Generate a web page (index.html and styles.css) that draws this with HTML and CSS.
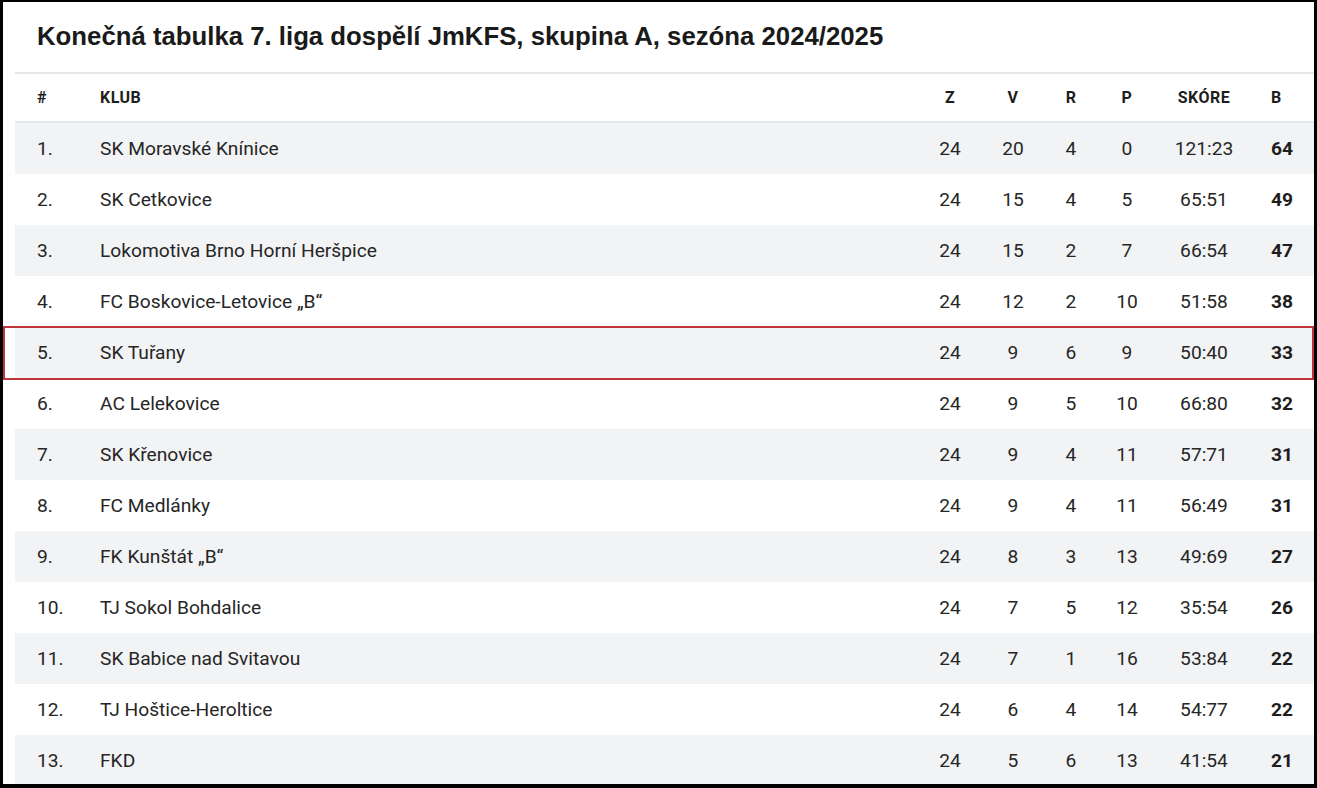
FILE: index.html
```html
<!DOCTYPE html>
<html lang="cs">
<head>
<meta charset="utf-8">
<title>Konečná tabulka</title>
<link rel="stylesheet" href="styles.css">
</head>
<body>
<div class="frame">
  <h1 class="title">Konečná tabulka 7. liga dospělí JmKFS, skupina A, sezóna 2024/2025</h1>
  <div class="table">
    <div class="row head">
      <div class="c pos">#</div><div class="c club">KLUB</div><div class="c n">Z</div><div class="c n">V</div><div class="c n">R</div><div class="c n">P</div><div class="c n">SKÓRE</div><div class="c pts">B</div>
    </div>
    <div class="row alt"><div class="c pos">1.</div><div class="c club">SK Moravské Knínice</div><div class="c n">24</div><div class="c n">20</div><div class="c n">4</div><div class="c n">0</div><div class="c n">121:23</div><div class="c pts">64</div></div>
    <div class="row"><div class="c pos">2.</div><div class="c club">SK Cetkovice</div><div class="c n">24</div><div class="c n">15</div><div class="c n">4</div><div class="c n">5</div><div class="c n">65:51</div><div class="c pts">49</div></div>
    <div class="row alt"><div class="c pos">3.</div><div class="c club">Lokomotiva Brno Horní Heršpice</div><div class="c n">24</div><div class="c n">15</div><div class="c n">2</div><div class="c n">7</div><div class="c n">66:54</div><div class="c pts">47</div></div>
    <div class="row"><div class="c pos">4.</div><div class="c club">FC Boskovice-Letovice „B“</div><div class="c n">24</div><div class="c n">12</div><div class="c n">2</div><div class="c n">10</div><div class="c n">51:58</div><div class="c pts">38</div></div>
    <div class="row alt mark"><div class="c pos">5.</div><div class="c club">SK Tuřany</div><div class="c n">24</div><div class="c n">9</div><div class="c n">6</div><div class="c n">9</div><div class="c n">50:40</div><div class="c pts">33</div></div>
    <div class="row"><div class="c pos">6.</div><div class="c club">AC Lelekovice</div><div class="c n">24</div><div class="c n">9</div><div class="c n">5</div><div class="c n">10</div><div class="c n">66:80</div><div class="c pts">32</div></div>
    <div class="row alt"><div class="c pos">7.</div><div class="c club">SK Křenovice</div><div class="c n">24</div><div class="c n">9</div><div class="c n">4</div><div class="c n">11</div><div class="c n">57:71</div><div class="c pts">31</div></div>
    <div class="row"><div class="c pos">8.</div><div class="c club">FC Medlánky</div><div class="c n">24</div><div class="c n">9</div><div class="c n">4</div><div class="c n">11</div><div class="c n">56:49</div><div class="c pts">31</div></div>
    <div class="row alt"><div class="c pos">9.</div><div class="c club">FK Kunštát „B“</div><div class="c n">24</div><div class="c n">8</div><div class="c n">3</div><div class="c n">13</div><div class="c n">49:69</div><div class="c pts">27</div></div>
    <div class="row"><div class="c pos">10.</div><div class="c club">TJ Sokol Bohdalice</div><div class="c n">24</div><div class="c n">7</div><div class="c n">5</div><div class="c n">12</div><div class="c n">35:54</div><div class="c pts">26</div></div>
    <div class="row alt"><div class="c pos">11.</div><div class="c club">SK Babice nad Svitavou</div><div class="c n">24</div><div class="c n">7</div><div class="c n">1</div><div class="c n">16</div><div class="c n">53:84</div><div class="c pts">22</div></div>
    <div class="row"><div class="c pos">12.</div><div class="c club">TJ Hoštice-Heroltice</div><div class="c n">24</div><div class="c n">6</div><div class="c n">4</div><div class="c n">14</div><div class="c n">54:77</div><div class="c pts">22</div></div>
    <div class="row alt"><div class="c pos">13.</div><div class="c club">FKD</div><div class="c n">24</div><div class="c n">5</div><div class="c n">6</div><div class="c n">13</div><div class="c n">41:54</div><div class="c pts">21</div></div>
  </div>
</div>
</body>
</html>
```

FILE: styles.css
```css
* { box-sizing: border-box; }
html, body { margin: 0; padding: 0; background: #fff; }
.frame {
  height: 788px;
  border-style: solid;
  border-color: #000;
  border-width: 2px 3px 4px 3px;
  overflow: hidden;
  background: #fff;
  padding-left: 12px;
}
.title {
  margin: 0;
  height: 70px;
  padding: 19px 0 0 22px;
  font-family: "Liberation Sans", Arial, sans-serif;
  font-weight: 700;
  font-size: 25.75px;
  line-height: 30px;
  color: #1a1a1a;
}
.table {
  font-family: Roboto, "Liberation Sans", sans-serif;
  color: #262626;
}
.row {
  position: relative;
  display: grid;
  grid-template-columns: 63px 1fr 62px 64px 52px 60px 94px 63px;
  align-items: center;
  height: 51px;
  padding-left: 22px;
  font-size: 19.2px;
}
.row.head {
  height: 51px;
  border-top: 2px solid #e6e7ea;
  border-bottom: 2px solid #e6e7ea;
  font-size: 16px;
  letter-spacing: 0.5px;
  font-weight: 700;
  color: #1e1e1e;
}
.row.alt { background: #f2f3f5; }
.c.n { text-align: center; }
.c.pts { padding-left: 20px; font-weight: 700; color: #1e1e1e; }
.row.mark::after {
  content: "";
  position: absolute;
  top: -1px;
  bottom: -2px;
  left: -12px;
  right: 0;
  border: 2px solid #bf343a;
  pointer-events: none;
}
```
